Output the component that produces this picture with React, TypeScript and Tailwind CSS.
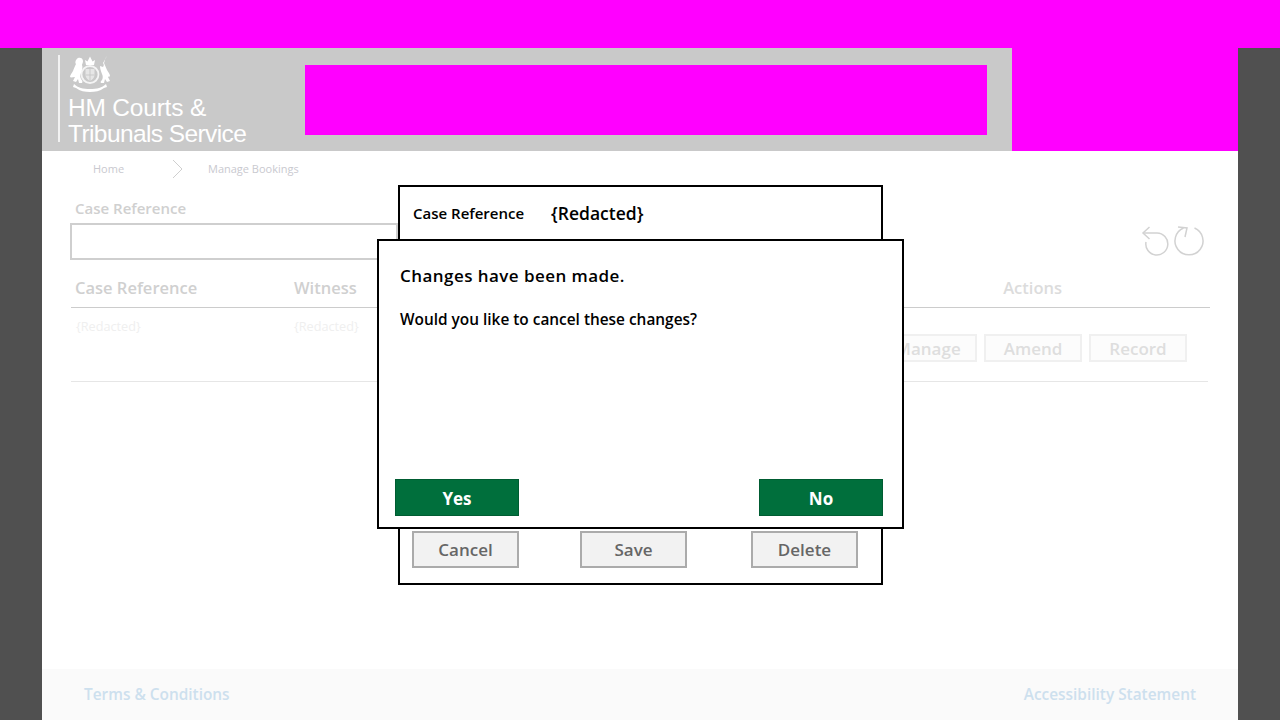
const OPEN_SANS = "font-['Open_Sans',sans-serif]";

function Crest() {
  return (
    <svg width="44" height="38" viewBox="0 0 44 38" fill="#fff" className="block">
      {/* crown */}
      <path d="M18 10 L17 5 L19.5 6.5 L22 1.5 L24.5 6.5 L27 5 L26 10 Z" />
      {/* garter and shield */}
      <circle cx="22" cy="19.5" r="8.5" fill="none" stroke="#f4f4f4" strokeWidth="1.8" />
      <path d="M17.5 14h9v6c0 3-2.5 5-4.5 6-2-1-4.5-3-4.5-6z" fill="#e6e6e6" />
      <path d="M21.5 14h1v12h-1zM17.5 19.5h9v1h-9z" fill="#c9c9c9" />
      {/* lion */}
      <path d="M10 3c2-1 5 0 5 3 0 2-1 3-1 4 1 2 0 5-1 8-1 2-1 4 0 6 1 1 2 3 1 4h-3l-1-4-2 3-3-1 2-4c-2 0-4 1-5 0 0-2 2-4 3-6 1-3 2-5 3-7-1-1-1-4 2-6z" />
      {/* unicorn */}
      <path d="M39 1l-4 7c1 1 1 3 0 4-1 0-2-1-3-1 0 3 1 5 2 8 1 2 1 4 0 6-1 1-2 2-1 3h3l1-4 2 3 3-1-2-4c1-1 2 0 2-1 0-2-2-4-3-6l-3-7 1-3c0-1 1-3 2-4z" />
      {/* motto scroll */}
      <path d="M6 29c4 4 9 5 16 5s12-1 16-5l1 3-3 1c-4 3-9 4-14 4s-10-1-14-4l-3-1z" />
    </svg>
  );
}

function GhostButton({ label }: { label: string }) {
  return (
    <div className="w-[98px] h-[28px] border-2 border-[#f0f0f0] bg-[#fcfcfc] text-[#dedede] text-[17px] font-semibold leading-[26px] text-center">
      {label}
    </div>
  );
}

export default function App() {
  return (
    <div className={`relative h-[720px] w-[1280px] overflow-hidden flex flex-col bg-[#505050] ${OPEN_SANS}`}>
      <div className="h-[48px] bg-[#ff00ff] shrink-0" />

      <div className="flex-1 mx-[42px] bg-white flex flex-col min-h-0">
        {/* Header */}
        <div className="h-[103px] shrink-0 flex">
          <div className="w-[970px] bg-[#c9c9c9] flex pl-[16px] pt-[7px]">
            <div className="w-[2px] h-[87px] bg-[#f2f2f2]" />
            <div className="ml-[8px] w-[237px]">
              <Crest />
              <div className="font-['Liberation_Sans',sans-serif] text-white text-[24.5px] leading-[26px] mt-[2px]">
                <div className="tracking-[-0.2px]">HM Courts &amp;</div>
                <div className="tracking-[-0.6px]">Tribunals Service</div>
              </div>
            </div>
            <div className="mt-[10px] w-[682px] h-[70px] bg-[#ff00ff]" />
          </div>
          <div className="flex-1 bg-[#ff00ff]" />
        </div>

        {/* Breadcrumb */}
        <div className="h-[36px] shrink-0 flex items-center text-[11px] text-[#c9c9cf] pl-[51px]">
          <span className="w-[79px]">Home</span>
          <svg width="12" height="20" viewBox="0 0 12 20" fill="none" stroke="#cfcfcf" strokeWidth="1" className="-mt-[1px]">
            <path d="M1 1l9 9-9 9" />
          </svg>
          <span className="ml-[24px]">Manage Bookings</span>
        </div>

        {/* Search */}
        <div className="h-[63px] shrink-0 pl-[28px] pr-[32px] flex justify-between">
          <div>
            <div className="pl-[5px] pt-[10px] text-[15px] leading-[22px] font-semibold text-[#d0d0d0]">Case Reference</div>
            <div className="mt-[4px] w-[328px] h-[37px] border-2 border-[#cfcfcf]" />
          </div>
          <div className="pt-[38px] h-fit">
            <svg width="66" height="32" viewBox="1140 225 66 32" fill="none" stroke="#d2d2d2" strokeWidth="1.5">
              <path d="M1143 233h14a11 11 0 1 1-11 9" />
              <path d="M1149.5 227l-6.5 6 6.5 6" />
              <path d="M1183.5 228a14 14 0 1 0 11 0" />
              <path d="M1178 227l9 1-2 9" />
            </svg>
          </div>
        </div>

        {/* Table head */}
        <div className="h-[58px] shrink-0 ml-[29px] mr-[28px] border-b border-[#cccccc] flex text-[16.5px] leading-[24px] font-semibold text-[#d0d0d0] pt-[26px]">
          <span className="ml-[4px] w-[219px]">Case Reference</span>
          <span>Witness</span>
          <span className="ml-auto mr-[148px] text-[#dcdcdc]">Actions</span>
        </div>

        {/* Table row */}
        <div className="h-[74px] shrink-0 ml-[29px] mr-[30px] border-b border-[#e6e6e6] flex text-[12.7px] leading-[18px] text-[#efefef]">
          <span className="ml-[5px] w-[218px] pt-[9px]">{"{Redacted}"}</span>
          <span className="pt-[9px]">{"{Redacted}"}</span>
          <div className="ml-auto mr-[21px] flex gap-[7px] pt-[26px]">
            <GhostButton label="Manage" />
            <GhostButton label="Amend" />
            <GhostButton label="Record" />
          </div>
        </div>

        <div className="flex-1" />

        {/* Footer */}
        <div className="h-[51px] shrink-0 bg-[#fafafa] flex items-center justify-between px-[42px] text-[15.4px] font-semibold text-[#cde0ee]">
          <span>Terms &amp; Conditions</span>
          <span>Accessibility Statement</span>
        </div>
      </div>

      {/* Edit booking dialog behind */}
      <div className="absolute left-[398px] top-[185px] w-[485px] h-[400px] border-2 border-black bg-white flex flex-col justify-between">
        <div className="flex items-center h-[53px] pl-[13px]">
          <span className="w-[138px] text-[15px] font-semibold text-black">Case Reference</span>
          <span className="text-[17.5px] font-semibold text-black">{"{Redacted}"}</span>
        </div>
        <div className="flex pl-[12px] pb-[15px] text-[#666666] text-[17px] font-semibold leading-[33px] text-center">
          <div className="w-[107px] h-[37px] border-2 border-[#ababab] bg-[#f2f2f2]">Cancel</div>
          <div className="ml-[61px] w-[107px] h-[37px] border-2 border-[#ababab] bg-[#f2f2f2]">Save</div>
          <div className="ml-[64px] w-[107px] h-[37px] border-2 border-[#ababab] bg-[#f2f2f2]">Delete</div>
        </div>
      </div>

      {/* Confirm dialog */}
      <div className="absolute left-[377px] top-[239px] w-[527px] h-[290px] border-2 border-black bg-white flex flex-col">
        <div className="pl-[21px] pt-[23px] text-[17px] leading-[24px] font-semibold text-black tracking-[0.45px]">Changes have been made.</div>
        <div className="pl-[21px] pt-[21px] text-[15.4px] leading-[22px] font-semibold text-black">Would you like to cancel these changes?</div>
        <div className="mt-auto flex justify-between pl-[16px] pr-[19px] pb-[11px]">
          <div className="w-[124px] h-[37px] bg-[#006f3c] border border-[#005c32] text-white text-[17px] font-bold leading-[37px] text-center">Yes</div>
          <div className="w-[124px] h-[37px] bg-[#006f3c] border border-[#005c32] text-white text-[17px] font-bold leading-[37px] text-center">No</div>
        </div>
      </div>
    </div>
  );
}
